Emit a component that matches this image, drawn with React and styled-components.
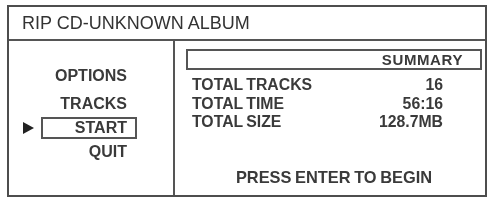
import React from "react";
import styled, { createGlobalStyle } from "styled-components";

const GlobalStyle = createGlobalStyle`
  html, body {
    margin: 0;
    padding: 0;
    background: #ffffff;
  }
  body {
    font-family: "Liberation Sans", Arial, sans-serif;
    color: #3a3a3a;
  }
`;

const Page = styled.div`
  padding: 5px 0 0 7px;
`;

const Screen = styled.div`
  box-sizing: border-box;
  width: 480px;
  height: 192px;
  border: 2px solid #4d4d4d;
  display: flex;
  flex-direction: column;
  filter: blur(0.35px);
`;

const Header = styled.div`
  height: 32px;
  display: flex;
  align-items: center;
  padding-left: 13px;
  border-bottom: 2px solid #555;
  font-size: 18px;
  font-weight: 400;
  color: #333;
`;

const Body = styled.div`
  flex: 1;
  display: flex;
  min-height: 0;
`;

const Menu = styled.div`
  box-sizing: border-box;
  width: 166px;
  border-right: 2px solid #555;
  padding: 25px 0 0 14px;
  display: flex;
  flex-direction: column;
  gap: 3px;
`;

const MenuRow = styled.div`
  display: grid;
  grid-template-columns: 12px 96px;
  column-gap: 6px;
  align-items: center;
  margin-bottom: ${(p) => p.$after || 0}px;
`;

const Arrow = styled.span`
  width: 0;
  height: 0;
  border-top: 6px solid transparent;
  border-bottom: 6px solid transparent;
  border-left: 11px solid #222;
  visibility: ${(p) => (p.$show ? "visible" : "hidden")};
`;

const MenuLabel = styled.div`
  box-sizing: border-box;
  text-align: right;
  font-size: 16px;
  font-weight: 700;
  line-height: ${(p) => (p.$selected ? "18px" : "20px")};
  padding-right: ${(p) => (p.$selected ? "8px" : "10px")};
  border: ${(p) => (p.$selected ? "2px solid #555" : "none")};
`;

const Panel = styled.div`
  flex: 1;
  padding: 8px 3px 0 11px;
  display: flex;
  flex-direction: column;
`;

const SummaryBox = styled.div`
  box-sizing: border-box;
  height: 21px;
  border: 2px solid #555;
  display: flex;
  align-items: center;
  justify-content: flex-end;
  padding-right: 17px;
  font-size: 15px;
  font-weight: 700;
  letter-spacing: 0.6px;
`;

const Stats = styled.div`
  width: 251px;
  margin: 6px 0 0 6px;
  display: grid;
  grid-template-columns: 1fr auto;
  font-size: 15.8px;
  font-weight: 700;
  line-height: 18.5px;
`;

const StatLabel = styled.div`
  word-spacing: -1px;
`;

const StatValue = styled.div`
  text-align: right;
`;

const Prompt = styled.div`
  margin-top: 35px;
  text-align: center;
  font-size: 16.4px;
  font-weight: 700;
  line-height: 20px;
  word-spacing: -1px;
`;

const menu = [
  { label: "OPTIONS", after: 5 },
  { label: "TRACKS" },
  { label: "START", selected: true },
  { label: "QUIT" },
];

const stats = [
  ["TOTAL TRACKS", "16"],
  ["TOTAL TIME", "56:16"],
  ["TOTAL SIZE", "128.7MB"],
];

export default function App() {
  return (
    <>
      <GlobalStyle />
      <Page>
        <Screen>
          <Header>RIP CD-UNKNOWN ALBUM</Header>
          <Body>
            <Menu>
              {menu.map((item) => (
                <MenuRow key={item.label} $after={item.after}>
                  <Arrow $show={item.selected} />
                  <MenuLabel $selected={item.selected}>{item.label}</MenuLabel>
                </MenuRow>
              ))}
            </Menu>
            <Panel>
              <SummaryBox>SUMMARY</SummaryBox>
              <Stats>
                {stats.map(([label, value]) => (
                  <React.Fragment key={label}>
                    <StatLabel>{label}</StatLabel>
                    <StatValue>{value}</StatValue>
                  </React.Fragment>
                ))}
              </Stats>
              <Prompt>PRESS ENTER TO BEGIN</Prompt>
            </Panel>
          </Body>
        </Screen>
      </Page>
    </>
  );
}
